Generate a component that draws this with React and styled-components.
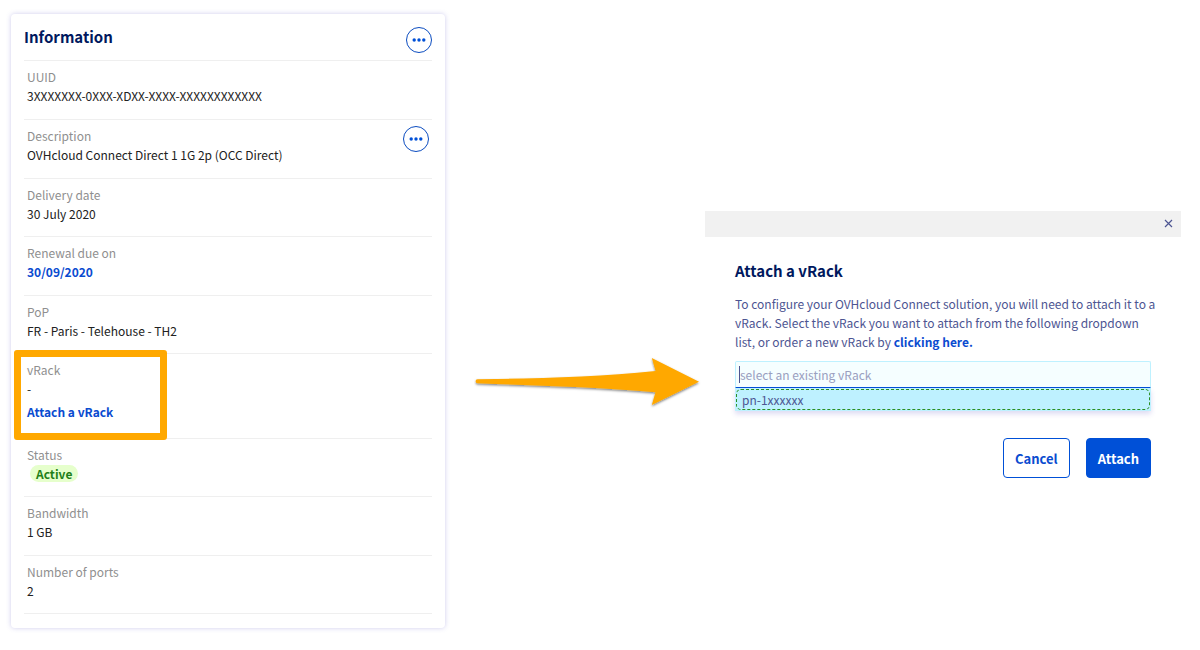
import React from 'react';
import styled, { createGlobalStyle, css } from 'styled-components';

const GlobalStyle = createGlobalStyle`
  *, *::before, *::after { box-sizing: border-box; }
  body {
    margin: 0;
    background: #fff;
    color: #212121;
    font-family: "Source Sans Pro", "Noto Sans CJK SC", sans-serif;
    font-size: 12px;
    line-height: 19px;
  }
  h1, h2, p, dl, dd, ul { margin: 0; padding: 0; }
  button, input { font: inherit; }
`;

const Page = styled.main`
  display: grid;
  grid-template-columns: 434fr 260px 476fr;
  align-items: start;
  padding: 14px 19px 20px 11px;
`;

const Card = styled.section`
  padding: 0 13px 14px;
  background: #fff;
  border-radius: 4px;
  box-shadow: 0 0 5px rgba(70, 60, 190, 0.26);
`;

const CardHeader = styled.header`
  display: flex;
  justify-content: space-between;
  align-items: flex-start;
  height: 47px;
  padding-top: 13px;
  border-bottom: 1px solid #efefef;
`;

const Title = styled.h1`
  color: #00185e;
  font-size: 15px;
  line-height: 20px;
  font-weight: 700;
`;

const RoundButton = styled.button`
  display: flex;
  align-items: center;
  justify-content: center;
  flex: none;
  width: 26px;
  height: 26px;
  padding: 0;
  border: 1px solid #0b4cc0;
  border-radius: 50%;
  background: #fff;
  color: #0050d7;
  cursor: pointer;
`;

const Row = styled.div`
  position: relative;
  display: flex;
  justify-content: space-between;
  align-items: flex-start;
  padding: 6px 3px ${(p) => (p.$roomy ? 14 : 13)}px;
  border-bottom: 1px solid #efefef;
`;

const Label = styled.dt`
  color: #8f8f8f;
`;

const Value = styled.dd`
  color: #212121;
`;

const RowAction = styled.dd`
  display: flex;
  height: 26px;
`;

const Link = styled.a`
  color: #0a4bd0;
  font-weight: 700;
  text-decoration: none;
`;

const LinkLine = styled.dd`
  padding-top: 4px;
  padding-bottom: 3px;
`;

const Badge = styled.span`
  display: inline-block;
  margin-left: 3px;
  padding: 0 6px;
  border-radius: 9px;
  background: #e6ffcc;
  color: #1f8019;
  font-weight: 700;
  line-height: 17px;
`;

const Highlight = styled.span`
  position: absolute;
  inset: -4px auto -2px -10px;
  width: 153px;
  border: 7px solid #ffa800;
  border-radius: 3px;
  pointer-events: none;
`;

const ArrowCell = styled.div`
  display: flex;
  justify-content: flex-end;
  padding: 340px 3px 0 0;
`;

const Modal = styled.section`
  margin-top: 197px;
  background: #fff;
`;

const ModalBar = styled.div`
  display: flex;
  justify-content: flex-end;
  align-items: center;
  height: 26px;
  padding: 0 8px 2px;
  background: #f1f1f1;
`;

const CloseButton = styled.button`
  display: flex;
  padding: 0;
  border: 0;
  background: none;
  color: #4d5592;
  cursor: pointer;
`;

const ModalBody = styled.div`
  padding: 24px 30px 22px;
`;

const Text = styled.p`
  margin: 13px -10px 0 0;
  color: #4d5592;
`;

const Combo = styled.div`
  position: relative;
  margin-top: 10px;
`;

const Field = styled.input`
  display: block;
  width: 100%;
  height: 27px;
  padding: 0 4px;
  border: 1px solid #bef1ff;
  border-bottom-color: #0050d7;
  border-radius: 2px 2px 0 0;
  outline: none;
  background: #f5feff;
  color: #4d5592;
  &::placeholder { color: #9aa0bf; opacity: 1; }
`;

const Caret = styled.span`
  position: absolute;
  left: 4px;
  top: 5px;
  width: 1px;
  height: 17px;
  background: #4d5592;
`;

const Options = styled.ul`
  list-style: none;
  padding: 1px;
  background: #bef1ff;
  box-shadow: 0 3px 5px rgba(70, 60, 190, 0.18);
`;

const Option = styled.li`
  padding: 0 5px;
  border: 1px dashed #2b8f22;
  border-radius: 5px;
  color: #4d5592;
`;

const Actions = styled.div`
  display: flex;
  justify-content: flex-end;
  gap: 16px;
  margin-top: 27px;
`;

const Button = styled.button`
  height: 40px;
  padding: 0 11px;
  border: 1px solid #0050d7;
  border-radius: 4px;
  font-size: 13px;
  font-weight: 700;
  cursor: pointer;
  ${(p) => (p.$primary
    ? css`background: #0050d7; color: #fff;`
    : css`background: #fff; color: #0a4bd0;`)}
`;

function MoreButton({ label }) {
  return (
    <RoundButton type="button" aria-label={label}>
      <svg width="14" height="4" viewBox="0 0 14 4" fill="currentColor" aria-hidden="true">
        <circle cx="2.2" cy="2" r="1.7" />
        <circle cx="7" cy="2" r="1.7" />
        <circle cx="11.8" cy="2" r="1.7" />
      </svg>
    </RoundButton>
  );
}

function Info({ label, roomy, action, extra, children }) {
  return (
    <Row $roomy={roomy}>
      <div>
        <Label>{label}</Label>
        <Value>{children}</Value>
        {extra}
      </div>
      {action}
    </Row>
  );
}

function Arrow() {
  return (
    <svg width="228" height="56" viewBox="0 0 228 56" aria-hidden="true">
      <defs>
        <filter id="arrow-shadow" x="-5%" y="-10%" width="110%" height="130%">
          <feDropShadow dx="0" dy="1.3" stdDeviation="1" floodColor="#000" floodOpacity="0.5" />
        </filter>
      </defs>
      <path
        d="M3.5 25.2 C65 24.5 125 23 181.5 17 L177.8 4 L225 27.8 L177.8 51 L181.5 38.2 C125 33 65 31.5 3.5 29.2 Q1.6 29 1.6 27.2 Q1.6 25.3 3.5 25.2 Z"
        fill="#ffa800"
        filter="url(#arrow-shadow)"
      />
    </svg>
  );
}

export default function App() {
  return (
    <>
      <GlobalStyle />
      <Page>
        <Card>
          <CardHeader>
            <Title>Information</Title>
            <MoreButton label="Information actions" />
          </CardHeader>
          <dl>
            <Info label="UUID" roomy>3XXXXXXX-0XXX-XDXX-XXXX-XXXXXXXXXXXX</Info>
            <Info
              label="Description"
              roomy
              action={<RowAction><MoreButton label="Description actions" /></RowAction>}
            >
              OVHcloud Connect Direct 1 1G 2p (OCC Direct)
            </Info>
            <Info label="Delivery date">30 July 2020</Info>
            <Info label="Renewal due on" roomy><Link href="#renewal">30/09/2020</Link></Info>
            <Info label="PoP">FR - Paris - Telehouse - TH2</Info>
            <Info
              label="vRack"
              roomy
              extra={<LinkLine><Link href="#attach">Attach a vRack</Link></LinkLine>}
              action={<Highlight />}
            >
              -
            </Info>
            <Info label="Status"><Badge>Active</Badge></Info>
            <Info label="Bandwidth" roomy>1 GB</Info>
            <Info label="Number of ports">2</Info>
          </dl>
        </Card>
        <ArrowCell><Arrow /></ArrowCell>
        <Modal role="dialog" aria-labelledby="attach-title">
          <ModalBar>
            <CloseButton type="button" aria-label="Close">
              <svg width="9" height="9" viewBox="0 0 9 9" stroke="currentColor" strokeWidth="1.2" aria-hidden="true">
                <path d="M1 1 L8 8 M8 1 L1 8" />
              </svg>
            </CloseButton>
          </ModalBar>
          <ModalBody>
            <Title as="h2" id="attach-title">Attach a vRack</Title>
            <Text>
              To configure your OVHcloud Connect solution, you will need to attach it to a vRack.
              {' '}Select the vRack you want to attach from the following dropdown list, or order a new vRack by{' '}
              <Link href="#order">clicking here.</Link>
            </Text>
            <Combo>
              <Field type="text" aria-label="vRack" placeholder="select an existing vRack" />
              <Caret />
              <Options role="listbox" aria-label="vRack">
                <Option role="option" aria-selected="true">pn-1xxxxxx</Option>
              </Options>
            </Combo>
            <Actions>
              <Button type="button">Cancel</Button>
              <Button type="button" $primary>Attach</Button>
            </Actions>
          </ModalBody>
        </Modal>
      </Page>
    </>
  );
}
